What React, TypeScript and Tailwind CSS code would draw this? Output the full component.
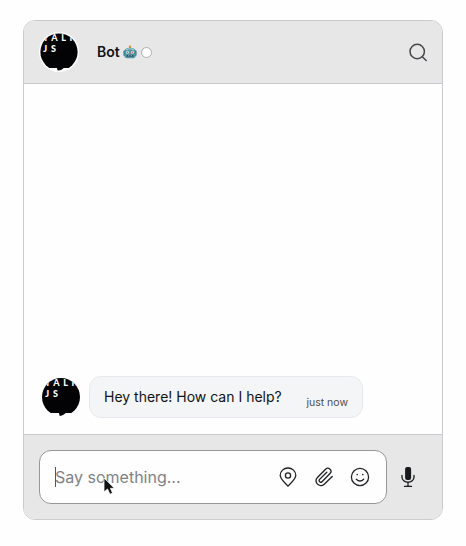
import React from "react";

function Avatar({ id, ring }: { id: string; ring?: boolean }) {
  return (
    <svg viewBox="0 0 40 40" className="size-10 shrink-0" aria-label="TalkJS">
      <defs>
        <clipPath id={id}>
          <circle cx="20" cy="20" r={ring ? 18.6 : 19} />
        </clipPath>
      </defs>
      {ring && <circle cx="20" cy="20" r="20" fill="#fff" />}
      <g clipPath={`url(#${id})`}>
        <rect width="40" height="40" fill="#fff" />
        <path d="M0 0H40V36H25C23.800 36 23.500 38.500 18.600 39L18 36H0Z" fill="#030305" />
        <g fill="#fff" fontFamily="Lato, sans-serif" fontWeight="900" fontSize="9">
          <text x="4" y="8.600">T</text>
          <text x="12.300" y="8.600">A</text>
          <text x="22.300" y="8.600">L</text>
          <text x="30.500" y="8.600">K</text>
          <text x="4.300" y="19.600">J</text>
          <text x="12" y="19.600">S</text>
        </g>
      </g>
    </svg>
  );
}

function Robot() {
  return (
    <svg viewBox="0 0 14 14" className="size-3.5">
      <rect x="0.5" y="5.500" width="2" height="5.500" rx="1" fill="#286576" />
      <rect x="11.5" y="5.500" width="2" height="5.500" rx="1" fill="#286576" />
      <rect x="6" y="1.500" width="2" height="3" fill="#7b6d55" />
      <circle cx="7" cy="1.500" r="1.300" fill="#eda03c" />
      <path d="M1.500 5.500C2 3.500 4 2.700 7 2.700s5 .8 5.500 2.800l.3 5Q12.500 13.200 10 13.200H4Q1.500 13.200 1.200 10.500Z" fill="#5296a6" />
      <path d="M3 4.900Q7 2.600 11 4.900" stroke="#a5d4d9" strokeWidth="1.200" fill="none" />
      <circle cx="4.500" cy="7.200" r="1.500" fill="#b7e3e5" />
      <circle cx="9.500" cy="7.200" r="1.500" fill="#b7e3e5" />
      <circle cx="4.500" cy="7.200" r=".7" fill="#d05a5a" />
      <circle cx="9.500" cy="7.200" r=".7" fill="#d05a5a" />
      <path d="M7 7l1 2H6Z" fill="#d95a55" />
      <rect x="3.500" y="10" width="7" height="1.700" rx=".7" fill="#255060" />
      <path d="M5 10.800h4" stroke="#a2cbd0" strokeWidth=".8" strokeDasharray="1 .5" />
    </svg>
  );
}

function PinIcon() {
  return (
    <svg viewBox="0 0 20 20" className="size-5" fill="none" stroke="#202225" strokeWidth="1.3" strokeLinejoin="round">
      <path d="M10 19.200C8.200 16.900 2.200 12.400 2.200 8.300A7.800 7.300 0 0 1 17.800 8.300C17.800 12.400 11.800 16.900 10 19.200Z" />
      <circle cx="10" cy="8.500" r="2.600" />
    </svg>
  );
}

function ClipIcon() {
  return (
    <svg viewBox="0 0 20 20" className="size-5" fill="none" stroke="#202225" strokeWidth="1.35" strokeLinecap="round" strokeLinejoin="round">
      <path d="M18.200 9.400L10.200 17.200A4.700 4.700 0 0 1 3.300 16.900A4.500 4.500 0 0 1 3.400 10.500L11.600 2.200A3.100 3.100 0 0 1 16 6.600L8 14.700A1.650 1.650 0 0 1 5.600 12.400L12.800 5.200" />
    </svg>
  );
}

function SmileIcon() {
  return (
    <svg viewBox="0 0 20 20" className="size-5" fill="none" stroke="#202225" strokeWidth="1.3" strokeLinecap="round">
      <circle cx="10" cy="10" r="8.600" />
      <path d="M6.300 12.200Q10 15.700 13.700 12.200" />
      <circle cx="7.200" cy="7.600" r=".8" fill="#202225" stroke="none" />
      <circle cx="12.800" cy="7.600" r=".8" fill="#202225" stroke="none" />
    </svg>
  );
}

function MicIcon() {
  return (
    <svg viewBox="0 0 16 22" className="h-[22px] w-4" fill="none" stroke="#17191c" strokeWidth="1.300" strokeLinecap="round">
      <rect x="5.100" y="1" width="6" height="13" rx="2" fill="#17191c" stroke="none" />
      <path d="M2 9.500v1.700a6 5 0 0 0 12 0V9.500M8 16.500v3.800M4.500 20.400h7" />
    </svg>
  );
}

export default function App() {
  return (
    <main className="h-[546px] w-[466px] bg-[#fefefe] pt-5 pl-[23px] font-['Inter',sans-serif]">
      <section className="flex h-[500px] w-[420px] flex-col overflow-hidden rounded-xl border border-[#cbcccf] bg-[#fefefe]">
        <header className="flex h-[63px] shrink-0 items-center border-b border-[#c9cacd] bg-[#e7e7e8] pr-3.5 pl-[15px]">
          <Avatar id="header-avatar" ring />
          <h1 className="ml-[18px] text-sm leading-5 font-semibold text-[#111215]">Bot</h1>
          <span className="ml-[3px]"><Robot /></span>
          <span className="ml-1 size-[11px] rounded-full border border-[#adaeb1] bg-white" />
          <svg viewBox="0 0 20 20" className="ml-auto size-5" fill="none" stroke="#45474b" strokeWidth="1.5" strokeLinecap="round">
            <circle cx="9.200" cy="9.500" r="7.200" />
            <path d="M14.300 14.700L18.200 18.500" />
          </svg>
        </header>

        <div className="flex grow items-end pb-4 pl-[17px]">
          <div className="flex items-center">
            <Avatar id="message-avatar" />
            <div className="ml-2 flex h-[42px] w-[274px] items-center justify-between rounded-xl border border-[#e7e8eb] bg-[#f4f5f7] px-3.5">
              <p className="text-sm leading-5 whitespace-nowrap text-[#111215]">Hey there! How can I help?</p>
              <time className="mt-3 text-[10.5px] leading-4 whitespace-nowrap text-[#4d4e52]">just now</time>
            </div>
          </div>
        </div>

        <footer className="flex h-[85px] shrink-0 items-center border-t border-[#cacbce] bg-[#e7e7e8] pl-[15px]">
          <div className="flex h-[54px] w-[348px] items-center rounded-xl border border-[#96979a] bg-[#fefefe] pr-4 pl-[15px]">
            <div className="relative h-5 text-base leading-5 text-[#818286]">
              <span className="absolute top-0 left-0 h-5 w-px bg-[#55575b]" />
              Say something...
              <svg viewBox="0 0 14 20" className="absolute top-[10px] left-[48px] h-5 w-3.5">
                <path d="M1 1V15L4.500 12L7 17.300L9.500 16L7.400 11.300H11.500Z" fill="#111" stroke="#fff" strokeWidth=".8" />
              </svg>
            </div>
            <div className="ml-auto flex gap-4">
              <PinIcon />
              <ClipIcon />
              <SmileIcon />
            </div>
          </div>
          <span className="ml-[13px]"><MicIcon /></span>
        </footer>
      </section>
    </main>
  );
}
